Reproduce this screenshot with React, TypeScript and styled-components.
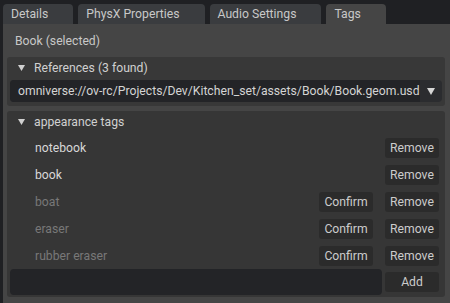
import React from "react";
import styled, { createGlobalStyle } from "styled-components";

const GlobalStyle = createGlobalStyle`
  html, body { margin: 0; padding: 0; background: #1f2023; }
  body { font-family: Roboto, "Liberation Sans", sans-serif; font-size: 12.2px; font-weight: 400; }
  * { box-sizing: border-box; }
`;

const Window = styled.div`
  width: 450px;
  height: 303px;
  display: flex;
  flex-direction: column;
  padding-left: 3px;
  background: #1f2023;
`;

const TabBar = styled.div`
  height: 24px;
  display: flex;
  align-items: flex-end;
  gap: 5px;
`;

const Tab = styled.div<{ $active?: boolean }>`
  height: 20px;
  padding: 0 25px 0 8px;
  display: flex;
  align-items: center;
  border-radius: 4px 4px 0 0;
  background: ${(p) => (p.$active ? "#454545" : "#3a3c3f")};
  color: #c8c8c8;
  white-space: nowrap;
`;

const Panel = styled.div`
  flex: 1;
  background: #454545;
  padding: 6px 5px 0 4px;
  display: flex;
  flex-direction: column;
`;

const Title = styled.div`
  height: 24px;
  line-height: 23px;
  padding-left: 8px;
  color: #c8c8c8;
  margin-bottom: 3px;
`;

const Frame = styled.div<{ $bg: string }>`
  background: ${(p) => p.$bg};
  border-radius: 3px;
  display: flex;
  flex-direction: column;
`;

const FrameHeader = styled.div`
  height: 22px;
  display: flex;
  align-items: center;
  padding-left: 11px;
  gap: 9px;
  color: #d0d0d0;
`;

const Combo = styled.div`
  margin: 1px 3px 4px 3px;
  height: 22px;
  display: flex;
  border-radius: 4px;
  overflow: hidden;
  background: #2b2c2f;
`;

const ComboField = styled.div`
  flex: 1;
  background: #232427;
  color: #d4d4d4;
  padding-left: 8px;
  display: flex;
  align-items: center;
  white-space: nowrap;
  overflow: hidden;
`;

const ComboArrow = styled.div`
  width: 22px;
  display: flex;
  align-items: center;
  justify-content: center;
`;

const Rows = styled.div`
  display: flex;
  flex-direction: column;
  padding: 1px 6px 2px 3px;
`;

const TagRow = styled.div`
  height: 27px;
  display: flex;
  align-items: center;
  gap: 12px;
`;

const TagName = styled.div<{ $dim?: boolean }>`
  flex: 1;
  padding-left: 25px;
  color: ${(p) => (p.$dim ? "#787878" : "#d8d8d8")};
`;

const Button = styled.div`
  width: 54px;
  height: 20px;
  border-radius: 3px;
  background: #2b2b2b;
  color: #cccccc;
  display: flex;
  align-items: center;
  justify-content: center;
`;

const InputRow = styled.div`
  height: 26px;
  display: flex;
  align-items: center;
  gap: 3px;
`;

const Input = styled.div`
  flex: 1;
  height: 26px;
  border-radius: 4px;
  background: #232427;
`;

const Spacer = styled.div`
  height: 5px;
  flex: none;
`;

const Triangle = () => (
  <svg width={7} height={6} viewBox="0 0 7 6">
    <polygon points="0,0 7,0 3.5,6" fill="#d0d0d0" />
  </svg>
);

const tags = [
  { name: "notebook", pending: false },
  { name: "book", pending: false },
  { name: "boat", pending: true },
  { name: "eraser", pending: true },
  { name: "rubber eraser", pending: true },
];

export default function App() {
  return (
    <>
      <GlobalStyle />
      <Window>
        <TabBar>
          <Tab>Details</Tab>
          <Tab>PhysX Properties</Tab>
          <Tab>Audio Settings</Tab>
          <Tab $active>Tags</Tab>
        </TabBar>
        <Panel>
          <Title>Book (selected)</Title>
          <Frame $bg="#383838">
            <FrameHeader>
              <Triangle />
              <span>References (3 found)</span>
            </FrameHeader>
            <Combo>
              <ComboField>omniverse://ov-rc/Projects/Dev/Kitchen_set/assets/Book/Book.geom.usd</ComboField>
              <ComboArrow>
                <svg width="8" height="7" viewBox="0 0 8 7">
                  <polygon points="0,0 8,0 4,7" fill="#d6d6d6" />
                </svg>
              </ComboArrow>
            </Combo>
          </Frame>
          <Spacer />
          <Frame $bg="#363636">
            <FrameHeader>
              <Triangle />
              <span>appearance tags</span>
            </FrameHeader>
            <Rows>
              {tags.map((t) => (
                <TagRow key={t.name}>
                  <TagName $dim={t.pending}>{t.name}</TagName>
                  {t.pending && <Button>Confirm</Button>}
                  <Button>Remove</Button>
                </TagRow>
              ))}
              <InputRow>
                <Input />
                <Button>Add</Button>
              </InputRow>
            </Rows>
          </Frame>
        </Panel>
      </Window>
    </>
  );
}
